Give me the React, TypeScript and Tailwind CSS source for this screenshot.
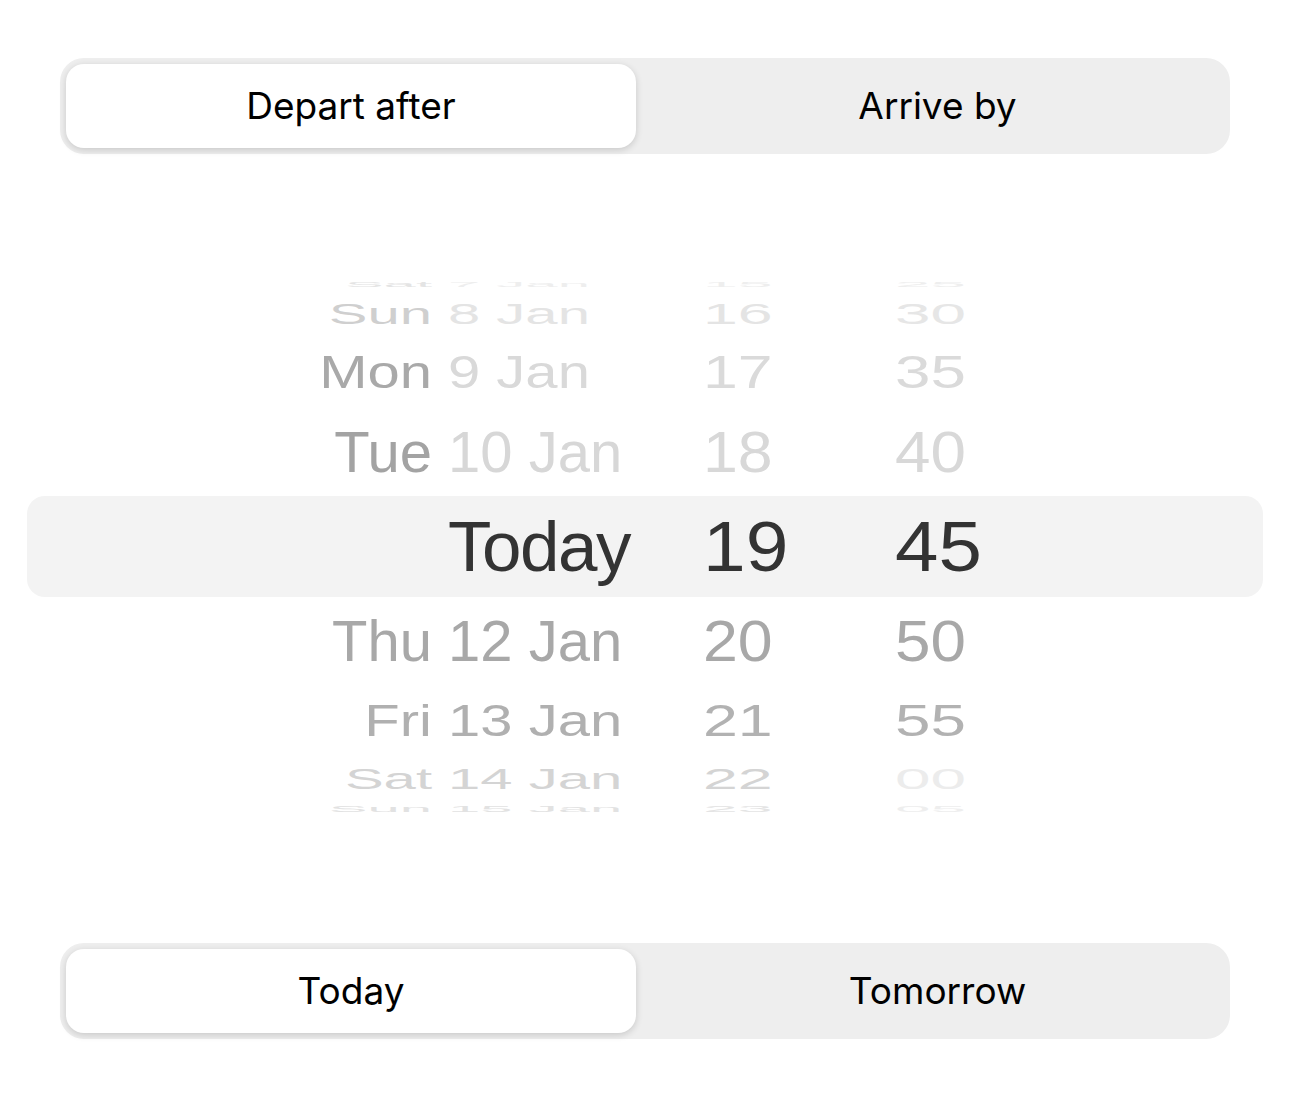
import React from "react";

type Row = {
  weekday: string;
  date: string;
  hour: string;
  minute: string;
  height: string;
  scale: string;
  size: string;
  wdColor: string;
  dateColor: string;
  hourColor: string;
  minColor: string;
  band?: boolean;
};

const rows: Row[] = [
  { weekday: "Sat", date: "7 Jan", hour: "15", minute: "25", height: "h-[16px]", scale: "scale-y-[0.14]", size: "text-[58px]", wdColor: "text-[#e4e4e4]", dateColor: "text-[#eeeeee]", hourColor: "text-[#eeeeee]", minColor: "text-[#eeeeee]" },
  { weekday: "Sun", date: "8 Jan", hour: "16", minute: "30", height: "h-[44px]", scale: "scale-y-[0.52]", size: "text-[58px]", wdColor: "text-[#cfcfcf]", dateColor: "text-[#e4e4e4]", hourColor: "text-[#e4e4e4]", minColor: "text-[#e6e6e6]" },
  { weekday: "Mon", date: "9 Jan", hour: "17", minute: "35", height: "h-[72px]", scale: "scale-y-[0.79]", size: "text-[58px]", wdColor: "text-[#a9a9a9]", dateColor: "text-[#d9d9d9]", hourColor: "text-[#dadada]", minColor: "text-[#dadada]" },
  { weekday: "Tue", date: "10 Jan", hour: "18", minute: "40", height: "h-[88px]", scale: "scale-y-100", size: "text-[58px]", wdColor: "text-[#a3a3a3]", dateColor: "text-[#d7d7d7]", hourColor: "text-[#d8d8d8]", minColor: "text-[#d8d8d8]" },
  { weekday: "", date: "Today", hour: "19", minute: "45", height: "h-[101px]", scale: "scale-y-100", size: "text-[71px]", wdColor: "text-[#333333]", dateColor: "text-[#333333] tracking-[-1.5px]", hourColor: "text-[#333333]", minColor: "text-[#333333]", band: true },
  { weekday: "Thu", date: "12 Jan", hour: "20", minute: "50", height: "h-[88px]", scale: "scale-y-100", size: "text-[58px]", wdColor: "text-[#a8a8a8]", dateColor: "text-[#a8a8a8]", hourColor: "text-[#a8a8a8]", minColor: "text-[#a8a8a8]" },
  { weekday: "Fri", date: "13 Jan", hour: "21", minute: "55", height: "h-[72px]", scale: "scale-y-[0.76]", size: "text-[58px]", wdColor: "text-[#b0b0b0]", dateColor: "text-[#b0b0b0]", hourColor: "text-[#b2b2b2]", minColor: "text-[#b2b2b2]" },
  { weekday: "Sat", date: "14 Jan", hour: "22", minute: "00", height: "h-[44px]", scale: "scale-y-[0.5]", size: "text-[58px]", wdColor: "text-[#d4d4d4]", dateColor: "text-[#d4d4d4]", hourColor: "text-[#d4d4d4]", minColor: "text-[#ececec]" },
  { weekday: "Sun", date: "15 Jan", hour: "23", minute: "05", height: "h-[16px]", scale: "scale-y-[0.17]", size: "text-[58px]", wdColor: "text-[#e2e2e2]", dateColor: "text-[#e2e2e2]", hourColor: "text-[#e4e4e4]", minColor: "text-[#eeeeee]" },
];

function Segmented({ left, right }: { left: string; right: string }) {
  return (
    <div className="mx-[60px] grid h-[96px] grid-cols-2 rounded-[24px] bg-[#eeeeee] text-[37px] text-black [font-family:Inter,sans-serif]">
      <div className="my-[6px] ml-[6px] mr-[9px] flex items-center justify-center rounded-[18px] bg-white shadow-[0_2px_7px_rgba(0,0,0,0.16)]">
        {left}
      </div>
      <div className="flex items-center justify-center">{right}</div>
    </div>
  );
}

function PickerRow({ row }: { row: Row }) {
  return (
    <div
      className={`${row.height} flex items-center ${
        row.band ? "rounded-[18px] bg-[#f3f3f3]" : ""
      }`}
    >
      <div className={`flex w-full items-center leading-none ${row.size} ${row.scale}`}>
        <div className={`w-[405px] text-right ${row.wdColor}`}>{row.weekday}</div>
        <div className={`ml-[16px] w-[255px] ${row.dateColor}`}>{row.date}</div>
        <div className="w-[192px]">
          <div className={`origin-left scale-x-[1.08] ${row.hourColor}`}>{row.hour}</div>
        </div>
        <div className={`origin-left scale-x-[1.1] ${row.minColor}`}>{row.minute}</div>
      </div>
    </div>
  );
}

export default function App() {
  return (
    <div className="h-[1109px] w-[1290px] overflow-hidden bg-white pt-[58px]">
      <Segmented left="Depart after" right="Arrive by" />

      {/* wheel picker */}
      <div className="mx-[27px] mt-[122px] flex flex-col [font-family:'Liberation_Sans',Arial,sans-serif]">
        {rows.map((row, index) => (
          <PickerRow key={index} row={row} />
        ))}
      </div>

      <div className="mt-[126px]">
        <Segmented left="Today" right="Tomorrow" />
      </div>
    </div>
  );
}
